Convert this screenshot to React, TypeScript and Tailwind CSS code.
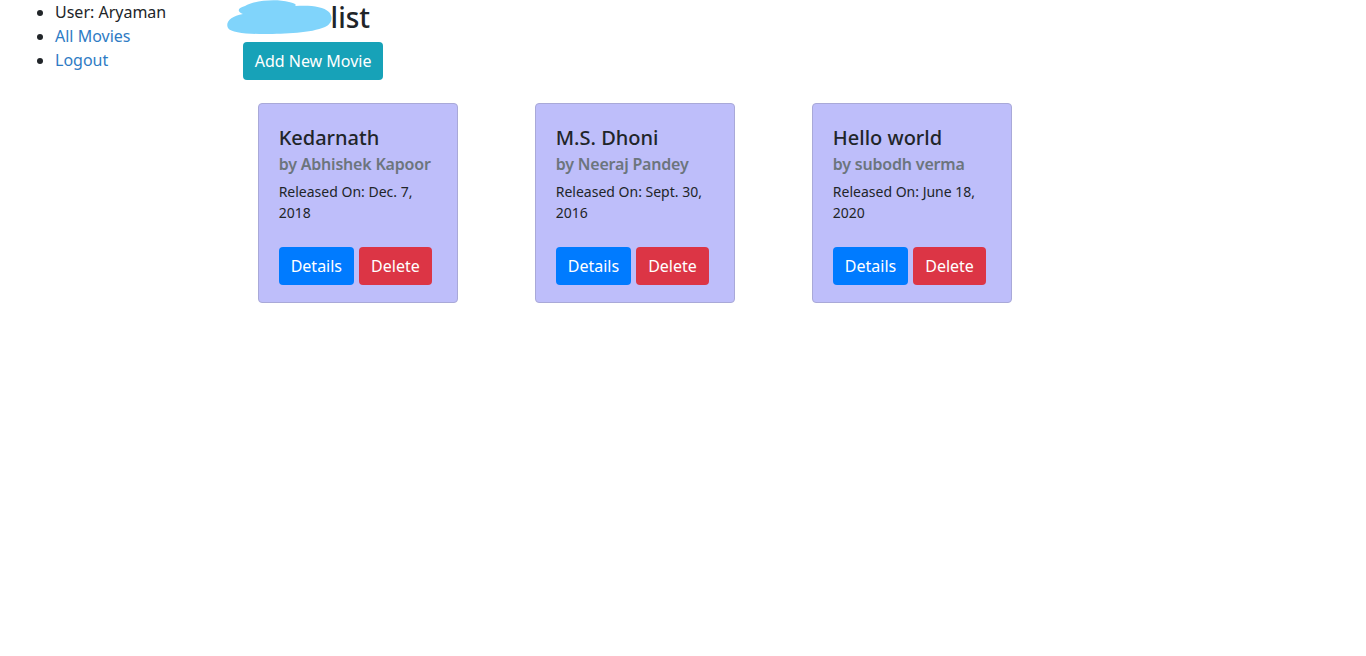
import React from "react";

const movies = [
  { title: "Kedarnath", director: "Abhishek Kapoor", released: "Dec. 7, 2018" },
  { title: "M.S. Dhoni", director: "Neeraj Pandey", released: "Sept. 30, 2016" },
  { title: "Hello world", director: "subodh verma", released: "June 18, 2020" },
];

const MovieCard = ({ movie }: { movie: (typeof movies)[number] }) => (
  <div className="w-[200px] h-[200px] bg-[#bebefa] border border-[#a9a9d8] rounded-[4px] overflow-hidden">
    <div className="p-5">
      <h5 className="text-[20px] leading-[24px] font-medium text-[#212529] pt-[2px] mb-[10px]">
        {movie.title}
      </h5>
      <h6 className="text-[16px] leading-[19px] font-semibold text-[#6c757d] -mt-[5px] mb-[7px] tracking-[-0.2px]">
        by {movie.director}
      </h6>
      <p className="text-[14px] leading-[21px] text-[#212529]">
        Released On: {movie.released}
      </p>
      <div className="flex gap-[5px] mt-6">
        <button className="bg-[#007bff] text-white text-[16px] leading-[24px] px-3 py-[7px] rounded-[4px]">
          Details
        </button>
        <button className="bg-[#dc3545] text-white text-[16px] leading-[24px] px-3 py-[7px] rounded-[4px]">
          Delete
        </button>
      </div>
    </div>
  </div>
);

const App = () => {
  return (
    <div
      className="min-h-screen bg-white text-[#212529] text-[16px] leading-[24px]"
      style={{ fontFamily: '"Noto Sans", "Open Sans", sans-serif' }}
    >
      <div className="flex">
        <div className="w-[227.67px] shrink-0 px-[15px]">
          <ul className="list-disc pl-10">
            <li>User: Aryaman</li>
            <li>
              <a href="#" className="text-[#2e7bc4]">All Movies</a>
            </li>
            <li>
              <a href="#" className="text-[#2e7bc4]">Logout</a>
            </li>
          </ul>
        </div>

        <div className="flex-1 px-[15px]">
          <div className="relative">
            <h3 className="text-[28px] leading-[34px] font-medium mb-2">Movie list</h3>
            {/* scribble covering the first word */}
            <svg
              className="absolute -left-[18px] top-0"
              width="108"
              height="36"
              viewBox="0 0 108 36"
            >
              <path
                fill="#80d4fb"
                d="M20 6 C30 0, 52 -1, 64 2 C70 3, 72 5, 70 6 C84 5, 98 6, 104 12 C109 18, 106 24, 100 27 C86 33, 60 34, 40 34 C22 34, 6 33, 3 28 C0 22, 6 16, 18 14 C12 12, 12 8, 20 6 Z"
              />
            </svg>
          </div>
          <button className="bg-[#17a2b8] text-white text-[16px] leading-[24px] px-3 py-[7px] rounded-[4px]">
            Add New Movie
          </button>

          <div className="grid grid-cols-4 mt-[23px]">
            {movies.map((m) => (
              <div key={m.title} className="pl-[15px]">
                <MovieCard movie={m} />
              </div>
            ))}
          </div>
        </div>
      </div>
    </div>
  );
};

export default App;
